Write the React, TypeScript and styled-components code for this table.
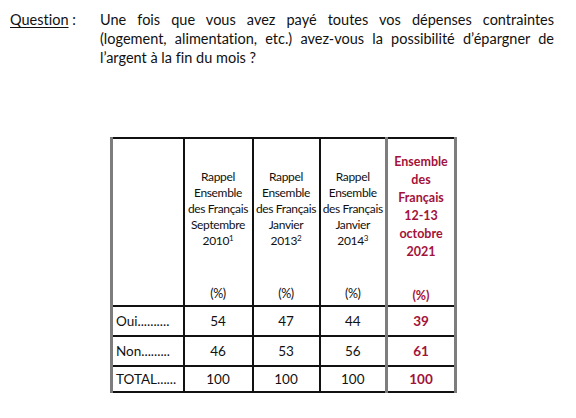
import React from "react";
import styled, { createGlobalStyle } from "styled-components";

const Global = createGlobalStyle`
  html, body { margin: 0; padding: 0; background: #ffffff; }
  body {
    font-family: Lato, "Open Sans", sans-serif;
    color: #111111;
    font-variant-ligatures: none;
    font-feature-settings: "liga" 0, "clig" 0;
  }
`;

const Page = styled.div`
  width: 576px;
  height: 418px;
  overflow: hidden;
  padding-top: 10px;
  box-sizing: border-box;
`;

const QuestionBlock = styled.div`
  display: grid;
  grid-template-columns: 90px 454px;
  padding-left: 10px;
  font-size: 14.5px;
  line-height: 19px;
`;

const Label = styled.div`
  white-space: nowrap;
`;

const Underlined = styled.span`
  text-decoration: underline;
  text-underline-offset: 2px;
`;

const Body = styled.div``;

const Line = styled.span<{ $justify?: boolean }>`
  display: block;
  white-space: nowrap;
  text-align: ${(p) => (p.$justify ? "justify" : "left")};
  text-align-last: ${(p) => (p.$justify ? "justify" : "left")};
`;

const TableWrap = styled.div`
  padding-left: 110px;
  padding-top: 70px;
`;

const Table = styled.table`
  border-collapse: collapse;
  table-layout: fixed;
  width: 344px;
  font-size: 13.5px;
  border-top: 2px solid #111;
  border-bottom: 2px solid #111;
`;

const Col = styled.col<{ $w: number }>`
  width: ${(p) => p.$w}px;
`;

type CellProps = { $red?: boolean; $grey?: "left" | "right" | "both" };

const greyBorders = (p: CellProps) => `
  ${p.$grey === "left" || p.$grey === "both" ? "border-left: 3px solid #7d7d7d;" : ""}
  ${p.$grey === "right" || p.$grey === "both" ? "border-right: 3px solid #7d7d7d;" : ""}
`;

const HeadCell = styled.th<CellProps>`
  height: 166px;
  padding: 0;
  vertical-align: top;
  font-weight: ${(p) => (p.$red ? 700 : 400)};
  color: ${(p) => (p.$red ? "#a3123a" : "#111111")};
  border-left: 2px solid #111;
  border-right: 2px solid #111;
  ${greyBorders}
`;

const HeadInner = styled.div<{ $red?: boolean }>`
  height: 166px;
  box-sizing: border-box;
  display: flex;
  flex-direction: column;
  justify-content: space-between;
  align-items: center;
  padding-top: ${(p) => (p.$red ? 14 : 30)}px;
  padding-bottom: ${(p) => (p.$red ? 0 : 3)}px;
  font-size: ${(p) => (p.$red ? 12.5 : 12)}px;
  letter-spacing: ${(p) => (p.$red ? 0 : -0.35)}px;
  line-height: ${(p) => (p.$red ? 18 : 16)}px;
  text-align: center;
  white-space: nowrap;
`;

const HeadLines = styled.div``;

const Pct = styled.div`
  font-size: 12.5px;
`;

const Sup = styled.span`
  font-size: 8px;
  vertical-align: 4px;
  line-height: 0;
`;

const Row = styled.tr<{ $h: number }>`
  height: ${(p) => p.$h}px;
  border-top: 2px solid #111;
`;

const LabelCell = styled.td<CellProps>`
  padding: 0 0 0 3px;
  text-align: left;
  white-space: nowrap;
  overflow: hidden;
  border-right: 2px solid #111;
  ${greyBorders}
`;

const NumCell = styled.td<CellProps>`
  padding: 0;
  text-align: center;
  font-weight: ${(p) => (p.$red ? 700 : 400)};
  color: ${(p) => (p.$red ? "#a3123a" : "#111111")};
  border-left: 2px solid #111;
  border-right: 2px solid #111;
  ${greyBorders}
`;

const heads: { lines: string[]; year: string; sup: string }[] = [
  { lines: ["Rappel", "Ensemble", "des Français", "Septembre"], year: "2010", sup: "1" },
  { lines: ["Rappel", "Ensemble", "des Français", "Janvier"], year: "2013", sup: "2" },
  { lines: ["Rappel", "Ensemble", "des Français", "Janvier"], year: "2014", sup: "3" },
];

const rows: { label: string; vals: number[]; h: number }[] = [
  { label: "Oui..........", vals: [54, 47, 44, 39], h: 30 },
  { label: "Non.........", vals: [46, 53, 56, 61], h: 30 },
  { label: "TOTAL......", vals: [100, 100, 100, 100], h: 26 },
];

export default function App() {
  return (
    <Page>
      <Global />
      <QuestionBlock>
        <Label>
          <Underlined>Question</Underlined> :
        </Label>
        <Body>
          <Line $justify>Une fois que vous avez payé toutes vos dépenses contraintes</Line>
          <Line $justify>(logement, alimentation, etc.) avez-vous la possibilité d’épargner de</Line>
          <Line>l’argent à la fin du mois ?</Line>
        </Body>
      </QuestionBlock>
      <TableWrap>
        <Table>
          <colgroup>
            <Col $w={72} />
            <Col $w={69} />
            <Col $w={67} />
            <Col $w={67} />
            <Col $w={69} />
          </colgroup>
          <thead>
            <tr>
              <HeadCell $grey="left" />
              {heads.map((h, i) => (
                <HeadCell key={i} $grey={i === 2 ? "right" : undefined}>
                  <HeadInner>
                    <HeadLines>
                      {h.lines.map((l, j) => (
                        <div key={j}>{l}</div>
                      ))}
                      <div>
                        {h.year}
                        <Sup>{h.sup}</Sup>
                      </div>
                    </HeadLines>
                    <Pct>(%)</Pct>
                  </HeadInner>
                </HeadCell>
              ))}
              <HeadCell $red $grey="both">
                <HeadInner $red>
                  <HeadLines>
                    {["Ensemble", "des", "Français", "12-13", "octobre", "2021"].map((l, j) => (
                      <div key={j}>{l}</div>
                    ))}
                  </HeadLines>
                  <Pct>(%)</Pct>
                </HeadInner>
              </HeadCell>
            </tr>
          </thead>
          <tbody>
            {rows.map((r) => (
              <Row key={r.label} $h={r.h}>
                <LabelCell $grey="left">{r.label}</LabelCell>
                {r.vals.map((v, i) => (
                  <NumCell key={i} $red={i === 3} $grey={i === 3 ? "both" : i === 2 ? "right" : undefined}>
                    {v}
                  </NumCell>
                ))}
              </Row>
            ))}
          </tbody>
        </Table>
      </TableWrap>
    </Page>
  );
}
